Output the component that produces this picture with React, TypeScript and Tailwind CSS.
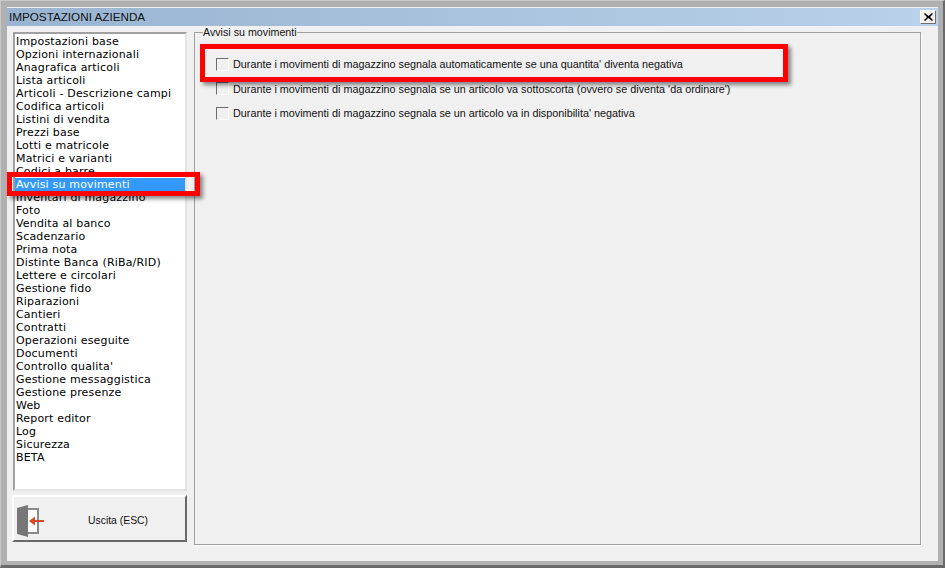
const menuItems = [
  "Impostazioni base",
  "Opzioni internazionali",
  "Anagrafica articoli",
  "Lista articoli",
  "Articoli - Descrizione campi",
  "Codifica articoli",
  "Listini di vendita",
  "Prezzi base",
  "Lotti e matricole",
  "Matrici e varianti",
  "Codici a barre",
  "Avvisi su movimenti",
  "Inventari di magazzino",
  "Foto",
  "Vendita al banco",
  "Scadenzario",
  "Prima nota",
  "Distinte Banca (RiBa/RID)",
  "Lettere e circolari",
  "Gestione fido",
  "Riparazioni",
  "Cantieri",
  "Contratti",
  "Operazioni eseguite",
  "Documenti",
  "Controllo qualita'",
  "Gestione messaggistica",
  "Gestione presenze",
  "Web",
  "Report editor",
  "Log",
  "Sicurezza",
  "BETA",
];

const warnings = [
  "Durante i movimenti di magazzino segnala automaticamente se una quantita' diventa negativa",
  "Durante i movimenti di magazzino segnala se un articolo va sottoscorta (ovvero se diventa 'da ordinare')",
  "Durante i movimenti di magazzino segnala se un articolo va in disponibilita' negativa",
];

const ExitIcon = () => (
  <svg width="30" height="32" viewBox="0 0 30 32">
    <path d="M11 4h11v24H11" fill="#fff" stroke="#8a8a8a" strokeWidth="2" />
    <path d="M1 3l11-3v32L1 29z" fill="#777" />
    <path d="M13 16l6-4.500v3.500h9v2h-9v3.500z" fill="#d8492c" />
  </svg>
);

const App = () => {
  return (
    <div className="w-[945px] h-[568px] overflow-hidden border border-t-[#c8c8c8] border-l-[#c8c8c8] border-r-2 border-b-[3px] border-r-[#6a6a6a] border-b-[#6a6a6a]">
      <div className="w-full h-full relative bg-[#f0f0f0] border-t-[6px] border-l-[6px] border-r-[5px] border-b-[4px] border-[#b0b0b0] text-black font-['Liberation_Sans',sans-serif]">
        <div className="h-[18px] mt-px flex items-center justify-between pl-0.5 pr-0.5 bg-gradient-to-r from-[#99b4d1] to-[#b9d1ea]">
          <span className="text-[11.700px] leading-none text-[#111]">IMPOSTAZIONI AZIENDA</span>
          <button className="w-[16px] h-[14px] flex items-center justify-center bg-[#f0f0f0] border border-[#fff] border-r-[#707070] border-b-[#707070]">
            <svg width="9" height="8" viewBox="0 0 9 8">
              <path d="M1 0l3.500 3L8 0l1 1-3 3 3 3-1 1-3.500-3L1 8 0 7l3-3-3-3z" fill="#000" />
            </svg>
          </button>
        </div>

        <div className="flex gap-[7px] pl-[5px] pt-px">
          <div className="w-[175px] flex flex-col gap-1 pt-[5px]">
            <ul className="h-[459px] ml-px w-[174px] bg-white border-2 border-[#a0a0a0] border-r-[#e3e3e3] border-b-[#e3e3e3] font-['DejaVu_Sans',sans-serif] text-[11px] tracking-[0.18px] leading-[13px] pt-px">
              {menuItems.map((item) =>
                item === "Avvisi su movimenti" ? (
                  <li key={item} className="h-[13px] pl-px bg-[#3399ff] text-white whitespace-nowrap">
                    {item}
                  </li>
                ) : (
                  <li key={item} className="h-[13px] pl-px whitespace-nowrap">
                    {item}
                  </li>
                ),
              )}
            </ul>
            <button className="h-[47px] w-[175px] flex items-center relative bg-[#f0f0f0] border-2 border-[#fff] border-r-[#696969] border-b-[#696969] text-[10.400px] text-[#111]">
              <span className="ml-0.5 mt-1">
                <ExitIcon />
              </span>
              <span className="ml-[42px] mt-1">Uscita (ESC)</span>
            </button>
          </div>

          <fieldset className="w-[727px] h-[518px] border border-[#a0a0a0] shadow-[1px_1px_0_#fff]">
            <legend className="ml-2 text-[10.700px] leading-none text-[#111]">Avvisi su movimenti</legend>
            <div className="flex flex-col gap-[11.500px] pl-[21px] pt-5">
              {warnings.map((text) => (
                <label key={text} className="flex items-center gap-1 h-[13px] text-[10.800px] text-[#111] whitespace-nowrap">
                  <span className="w-[13px] h-[13px] bg-[#f0f0f0] border border-[#6e6e6e] border-r-white border-b-white" />
                  {text}
                </label>
              ))}
            </div>
          </fieldset>
        </div>

        {/* red annotation boxes */}
        <div className="absolute left-[193px] top-[37px] w-[588px] h-[38px] border-[5px] border-[#ff0000] shadow-[3px_3px_4px_rgba(0,0,0,0.45)]" />
        <div className="absolute left-[0px] top-[165px] w-[193px] h-[24px] border-[5px] border-[#ff0000] shadow-[3px_3px_4px_rgba(0,0,0,0.45)]" />
      </div>
    </div>
  );
};

export default App;
